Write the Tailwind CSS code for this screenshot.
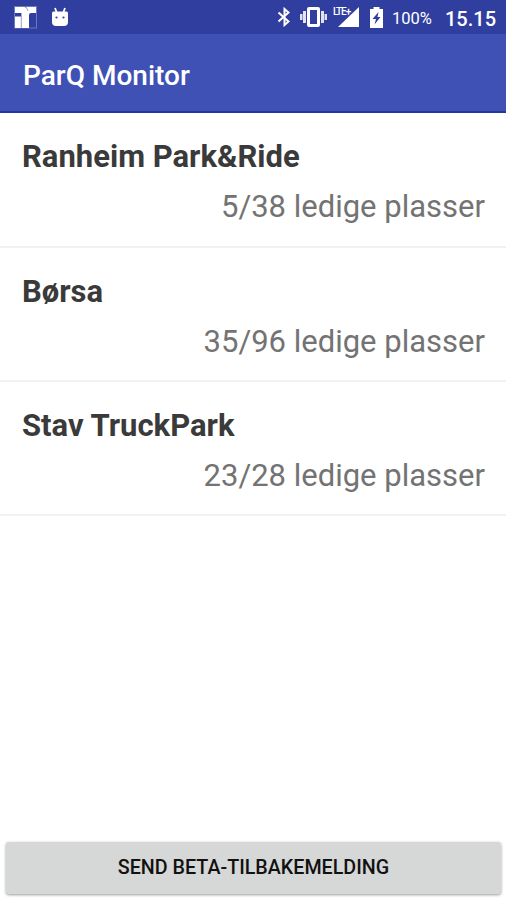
<!DOCTYPE html>
<html lang="no">

<head>
    <meta charset="UTF-8">
    <meta name="viewport" content="width=device-width, initial-scale=1.0">
    <title>ParQ Monitor</title>
    <script src="https://cdn.jsdelivr.net/npm/@tailwindcss/browser@4"></script>
</head>

<body class="bg-white font-[Roboto,sans-serif]">
    <div class="flex flex-col h-[900px] w-[506px] overflow-hidden">
        <!-- Status bar -->
        <div class="flex items-center h-[34px] bg-[#303f9f] text-white pl-[14px] pr-[10px] shrink-0">
            <svg class="w-[23px] h-[23px]" viewBox="0 0 23 23" fill="#fff">
                <rect x="0.5" y="0.5" width="22" height="21.5" fill="none" stroke="#fff" stroke-opacity=".3" />
                <path d="M1 1h9q3 0 3.5 3v18H7V7H1z" />
                <path d="M1 10.5h6V22H1z" />
                <path d="M12 1h10v6h-5q-2 0-2 2v13h-4V7z" />
                <path d="M7.300 7v15M12 1l2 4" stroke="#303f9f" stroke-width=".5" fill="none" />
            </svg>
            <svg class="w-[18px] h-[20px] ml-[14px]" viewBox="0 0 18 20">
                <path d="M4 1l1.5 4M14 1l-1.5 4" stroke="#fff" stroke-width="1.8" />
                <path d="M1 6q0-1.500 1.500-1.500h13Q17 4.500 17 6v9q0 4-4 4H5q-4 0-4-4z" fill="#fff" />
                <circle cx="5.5" cy="10.5" r="1.1" fill="#303f9f" />
                <circle cx="12.5" cy="10.5" r="1.1" fill="#303f9f" />
            </svg>
            <div class="flex items-center ml-auto">
                <svg class="w-[14px] h-[20px]" viewBox="0 0 14 20" fill="none" stroke="#fff" stroke-width="2">
                    <path d="M1.5 5.5l10 9-4 3.5V2l4 3.500-10 9" />
                </svg>
                <svg class="w-[27px] h-[20px] ml-[9px]" viewBox="0 0 27 20" fill="#fff">
                    <path d="M9 0h9q2 0 2 2v16q0 2-2 2H9q-2 0-2-2V2q0-2 2-2zm1 3v14h7V3z" fill-rule="evenodd" />
                    <path d="M3 4h3v12H3zM21 4h3v12h-3zM0 7h2.500v6H0zM24.500 7H27v6h-2.500z" fill-opacity=".85" />
                </svg>
                <div class="relative w-[27px] h-[20px] ml-[6px]">
                    <svg class="w-[27px] h-[20px]" viewBox="0 0 27 20" fill="#fff">
                        <path d="M26 0v20H5L16 9.500z" />
                    </svg>
                    <span class="absolute left-0 top-0 text-[10px] leading-[10px] font-medium tracking-[-1.1px]">LTE+</span>
                </div>
                <svg class="w-[15px] h-[21px] ml-[9px] mr-px" viewBox="0 0 15 21">
                    <path d="M4.5 0h6v2H14v19H1V2h3.500z" fill="#fff" />
                    <path d="M9.5 5l-6 7H7l-1.500 5.500 6-7.500h-3z" fill="#303f9f" />
                </svg>
                <span class="ml-[7px] w-[40px] text-[16.5px] leading-5 pt-[3px] whitespace-nowrap">100%</span>
                <span class="ml-[13px] w-[51px] text-[20px] leading-5 pt-[3px] font-medium whitespace-nowrap">15.15</span>
            </div>
        </div>

        <!-- App bar -->
        <header class="flex items-center h-[79px] bg-[#3f51b5] border-b-2 border-[#2137a0] pl-[23px] shrink-0">
            <h1 class="text-white font-medium text-[28px] leading-8 pt-[7px]">ParQ Monitor</h1>
        </header>

        <!-- Parking list -->
        <main>
            <section class="h-[135px] border-b-2 border-[#f1f1f1] pl-[22px] pr-[21px] pt-[24px]">
                <h2 class="text-[#3a3a3a] font-bold text-[31px] leading-10">Ranheim Park&amp;Ride</h2>
                <p class="text-[#737373] text-[31px] leading-10 mt-[10px] text-right">5/38 ledige plasser</p>
            </section>
            <section class="h-[134px] border-b-2 border-[#f1f1f1] pl-[22px] pr-[21px] pt-[24px]">
                <h2 class="text-[#3a3a3a] font-bold text-[31px] leading-10">Børsa</h2>
                <p class="text-[#737373] text-[31px] leading-10 mt-[10px] text-right">35/96 ledige plasser</p>
            </section>
            <section class="h-[134px] border-b-2 border-[#f1f1f1] pl-[22px] pr-[21px] pt-[24px]">
                <h2 class="text-[#3a3a3a] font-bold text-[31px] leading-10">Stav TruckPark</h2>
                <p class="text-[#737373] text-[31px] leading-10 mt-[10px] text-right">23/28 ledige plasser</p>
            </section>
        </main>

        <button
            class="mt-auto ml-[6px] mr-[5px] mb-[6px] h-[52px] rounded-[3px] bg-[#d6d7d7] text-[#111] text-[19.7px] font-medium shadow-[0_1px_3px_rgba(0,0,0,0.4)]">
            SEND BETA-TILBAKEMELDING
        </button>
    </div>
</body>

</html>
